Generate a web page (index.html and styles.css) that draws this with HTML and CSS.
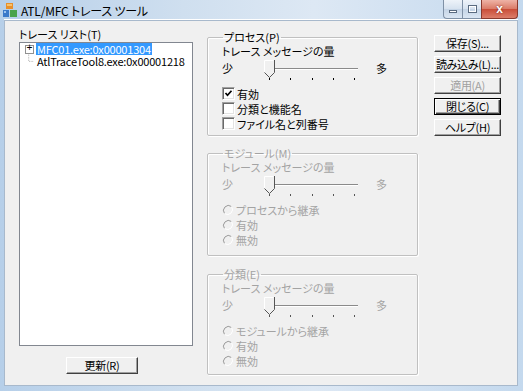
FILE: index.html
```html
<!DOCTYPE html>
<html lang="ja">
<head>
    <meta charset="UTF-8">
    <meta name="viewport" content="width=device-width, initial-scale=1.0">
    <title>ATL/MFC トレース ツール</title>
    <link rel="stylesheet" href="styles.css">
</head>
<body>
<div class="window">
    <div class="titlebar">
        <svg class="app-icon" width="14" height="15" viewBox="0 0 14 15">
            <rect x="3" y="0" width="7" height="6" fill="#e8902c"/>
            <rect x="4" y="1" width="5" height="2" fill="#f6c26c"/>
            <rect x="0" y="7" width="6" height="7" fill="#3b79c9"/>
            <rect x="7" y="7" width="7" height="7" fill="#4aa34a"/>
            <rect x="1" y="8" width="2" height="2" fill="#9cc4f0"/>
        </svg>
        <span class="title">ATL/MFC トレース ツール</span>
        <div class="controls">
            <span class="ctl ctl-min"><i></i></span>
            <span class="ctl ctl-max"><i></i></span>
            <span class="ctl ctl-close">x</span>
        </div>
    </div>

    <div class="client">
        <div class="col-list">
            <div class="caption">トレース リスト(T)</div>
            <div class="tree">
                <div class="tree-row">
                    <span class="expander">+</span>
                    <span class="item selected">MFC01.exe:0x00001304</span>
                </div>
                <div class="tree-row">
                    <svg class="twig" width="11" height="12" viewBox="0 0 11 12">
                        <path d="M4.5 -3 V6.5 H11" fill="none" stroke="#a0a0a0" stroke-dasharray="1 1"/>
                    </svg>
                    <span class="item">AtlTraceTool8.exe:0x00001218</span>
                </div>
            </div>
            <button class="btn btn-refresh">更新(R)</button>
        </div>

        <div class="col-groups">
            <fieldset class="group group-process">
                <legend>プロセス(P)</legend>
                <div class="caption">トレース メッセージの量</div>
                <div class="slider-row">
                    <span class="end">少</span>
                    <div class="slider">
                        <div class="track"></div>
                        <div class="ticks"><i></i><i></i><i></i><i></i><i></i></div>
                        <svg class="thumb" width="11" height="18" viewBox="0 0 11 18">
                            <polygon points="0,0 10,0 10,12 5,17 0,12" fill="#f0f0f0"/>
                            <polyline points="0.5,12 0.5,0.5 9.5,0.5" fill="none" stroke="#fff"/>
                            <polyline points="10.5,0 10.5,12.5 5.5,17.5 0.5,12.5" fill="none" stroke="#555"/>
                        </svg>
                    </div>
                    <span class="end end-max">多</span>
                </div>
                <div class="options">
                    <label class="opt">
                        <span class="checkbox">
                            <svg width="9" height="9" viewBox="0 0 9 9"><path d="M1.5 4 L3.5 6.2 L7.5 1.8" fill="none" stroke="#000" stroke-width="1.7"/></svg>
                        </span>
                        有効
                    </label>
                    <label class="opt"><span class="checkbox"></span>分類と機能名</label>
                    <label class="opt"><span class="checkbox"></span>ファイル名と列番号</label>
                </div>
            </fieldset>

            <fieldset class="group group-module disabled">
                <legend>モジュール(M)</legend>
                <div class="caption">トレース メッセージの量</div>
                <div class="slider-row">
                    <span class="end">少</span>
                    <div class="slider">
                        <div class="track"></div>
                        <div class="ticks"><i></i><i></i><i></i><i></i><i></i></div>
                        <svg class="thumb" width="11" height="18" viewBox="0 0 11 18">
                            <polygon points="0,0 10,0 10,12 5,17 0,12" fill="#f0f0f0"/>
                            <polyline points="0.5,12 0.5,0.5 9.5,0.5" fill="none" stroke="#fff"/>
                            <polyline points="10.5,0 10.5,12.5 5.5,17.5 0.5,12.5" fill="none" stroke="#555"/>
                        </svg>
                    </div>
                    <span class="end end-max">多</span>
                </div>
                <div class="options">
                    <label class="opt"><svg class="radio" width="12" height="12" viewBox="0 0 12 12"><circle cx="6" cy="6" r="5" fill="#f0f0f0"/><path d="M9.5 2.5A5 5 0 0 0 2.5 9.5" fill="none" stroke="#9a9a9a"/><path d="M9.5 2.5A5 5 0 0 1 2.5 9.5" fill="none" stroke="#fff"/></svg>プロセスから継承</label>
                    <label class="opt"><svg class="radio" width="12" height="12" viewBox="0 0 12 12"><circle cx="6" cy="6" r="5" fill="#f0f0f0"/><path d="M9.5 2.5A5 5 0 0 0 2.5 9.5" fill="none" stroke="#9a9a9a"/><path d="M9.5 2.5A5 5 0 0 1 2.5 9.5" fill="none" stroke="#fff"/></svg>有効</label>
                    <label class="opt"><svg class="radio" width="12" height="12" viewBox="0 0 12 12"><circle cx="6" cy="6" r="5" fill="#f0f0f0"/><path d="M9.5 2.5A5 5 0 0 0 2.5 9.5" fill="none" stroke="#9a9a9a"/><path d="M9.5 2.5A5 5 0 0 1 2.5 9.5" fill="none" stroke="#fff"/></svg>無効</label>
                </div>
            </fieldset>

            <fieldset class="group group-category disabled">
                <legend>分類(E)</legend>
                <div class="caption">トレース メッセージの量</div>
                <div class="slider-row">
                    <span class="end">少</span>
                    <div class="slider">
                        <div class="track"></div>
                        <div class="ticks"><i></i><i></i><i></i><i></i><i></i></div>
                        <svg class="thumb" width="11" height="18" viewBox="0 0 11 18">
                            <polygon points="0,0 10,0 10,12 5,17 0,12" fill="#f0f0f0"/>
                            <polyline points="0.5,12 0.5,0.5 9.5,0.5" fill="none" stroke="#fff"/>
                            <polyline points="10.5,0 10.5,12.5 5.5,17.5 0.5,12.5" fill="none" stroke="#555"/>
                        </svg>
                    </div>
                    <span class="end end-max">多</span>
                </div>
                <div class="options">
                    <label class="opt"><svg class="radio" width="12" height="12" viewBox="0 0 12 12"><circle cx="6" cy="6" r="5" fill="#f0f0f0"/><path d="M9.5 2.5A5 5 0 0 0 2.5 9.5" fill="none" stroke="#9a9a9a"/><path d="M9.5 2.5A5 5 0 0 1 2.5 9.5" fill="none" stroke="#fff"/></svg>モジュールから継承</label>
                    <label class="opt"><svg class="radio" width="12" height="12" viewBox="0 0 12 12"><circle cx="6" cy="6" r="5" fill="#f0f0f0"/><path d="M9.5 2.5A5 5 0 0 0 2.5 9.5" fill="none" stroke="#9a9a9a"/><path d="M9.5 2.5A5 5 0 0 1 2.5 9.5" fill="none" stroke="#fff"/></svg>有効</label>
                    <label class="opt"><svg class="radio" width="12" height="12" viewBox="0 0 12 12"><circle cx="6" cy="6" r="5" fill="#f0f0f0"/><path d="M9.5 2.5A5 5 0 0 0 2.5 9.5" fill="none" stroke="#9a9a9a"/><path d="M9.5 2.5A5 5 0 0 1 2.5 9.5" fill="none" stroke="#fff"/></svg>無効</label>
                </div>
            </fieldset>
        </div>

        <div class="col-buttons">
            <button class="btn">保存(S)...</button>
            <button class="btn">読み込み(L)...</button>
            <button class="btn" disabled>適用(A)</button>
            <button class="btn btn-default">閉じる(C)</button>
            <button class="btn">ヘルプ(H)</button>
        </div>
    </div>
</div>
</body>
</html>
```

FILE: styles.css
```css
* { box-sizing: border-box; }
body {
    margin: 0;
    font-family: "Noto Sans CJK JP", "Liberation Sans", sans-serif;
    font-size: 11px;
    font-feature-settings: "palt";
    color: #000;
}

.window {
    width: 523px; height: 391px;
    display: flex; flex-direction: column;
    background: linear-gradient(90deg, #b6cfe9 0%, #cfdfef 35%, #dde8f4 60%, #c4d9ee 100%);
}

/* title bar */
.titlebar { height: 20px; display: flex; align-items: center; padding-left: 3px; }
.app-icon { margin-top: 1px; }
.title { margin-left: 4px; font-size: 12px; letter-spacing: -0.2px; }
.controls { margin-left: auto; margin-right: 5px; align-self: flex-start; display: flex; height: 19px; }
.ctl {
    display: flex; align-items: center; justify-content: center;
    height: 19px; border: 1px solid #7f91a6; border-top: none;
    background: linear-gradient(#eef3f9, #d6e2ef 50%, #c4d4e6 51%, #dae6f3);
}
.ctl-min { width: 19px; border-radius: 0 0 0 4px; border-right: none; }
.ctl-max { width: 19px; border-right: none; }
.ctl-min i { width: 8px; height: 3px; margin-top: 5px; background: #fff; border: 1px solid #5a6b80; }
.ctl-max i { width: 9px; height: 8px; background: transparent; border: 1px solid #5a6b80; box-shadow: inset 0 0 0 1px #fff; }
.ctl-close {
    width: 37px; border-radius: 0 0 4px 0; border-color: #8a3a2e;
    background: linear-gradient(#eeb3a6, #da7a66 50%, #c94d38 51%, #dc7e6a);
    color: #fff; font-family: "Liberation Sans", sans-serif; font-weight: bold; font-size: 12px;
    text-shadow: 0 0 2px #6a1a10;
}

/* client area */
.client {
    margin-left: 4px;
    width: 514px; height: 366px;
    background: #f0f0f0;
    border: 1px solid #a8b9cc;
    box-shadow: 0 -1px #fff;
    display: flex;
    padding: 7px 0 0 14px;
}
.caption { line-height: 12px; height: 12px; white-space: nowrap; }

.col-list { width: 174px; display: flex; flex-direction: column; }
.tree {
    margin-top: 2px; height: 304px;
    background: #fff; border: 1px solid #828790;
}
.tree-row { height: 12px; display: flex; align-items: center; padding-left: 5px; white-space: nowrap; }
.expander {
    width: 9px; height: 9px; border: 1px solid #919191;
    font-family: "Liberation Mono", monospace; font-size: 10px; line-height: 6px;
    text-align: center; color: #000; background: #fff;
}
.twig { overflow: visible; width: 9px; height: 12px; }
.item { margin-left: 2px; padding: 0 1px; line-height: 12px; height: 12px; letter-spacing: -0.2px; }
.selected { background: #3399ff; color: #fff; }

.btn {
    font: inherit; font-size: 11px; font-feature-settings: "palt";
    height: 17px; padding: 0; line-height: 13px; white-space: nowrap; letter-spacing: -0.3px;
    background: #f0f0f0; color: #000;
    border: 1px solid; border-color: #fff #404040 #404040 #fff;
    box-shadow: inset -1px -1px #a0a0a0;
}
.btn:disabled { color: #a0a0a0; }
.btn-default {
    border-color: #000;
    box-shadow: inset 1px 1px #fff, inset -1px -1px #404040, inset -2px -2px #a0a0a0;
}
.btn-refresh { width: 72px; margin: 11px 0 0 47px; }

/* groups */
.col-groups { width: 211px; margin-left: 14px; display: flex; flex-direction: column; }
.group {
    margin: 3px 0 0 0; padding: 2px 0 0 14px; min-width: 0;
    border: 1px solid #c0c0c0; border-radius: 2px;
    box-shadow: 1px 1px #fff, inset 1px 1px #fff;
}
.group legend { padding: 0 1px; margin-left: 1px; line-height: 12px; }
.group-process { height: 105px; }
.group-module { height: 109px; margin-top: 11px; }
.group-category { height: 107px; margin-top: 12px; }
.disabled { color: #a3a3a3; }

.slider-row { display: flex; align-items: flex-start; margin-top: 3px; }
.end { line-height: 12px; margin-top: 2px; width: 11px; }
.end-max { margin-left: 16px; }
.slider { position: relative; width: 96px; height: 22px; margin-left: 31px; }
.track { margin: 8px 0 0 5px; width: 89px; height: 2px; border-top: 1px solid #8a8a8a; border-bottom: 1px solid #fff; }
.ticks { margin: 8px 0 0 5px; width: 86px; display: flex; justify-content: space-between; }
.ticks i { width: 1px; height: 2px; background: #000; }
.disabled .ticks i { background: #555; }
.thumb { position: absolute; left: 0; top: 0; }

.options { margin-top: 4px; display: flex; flex-direction: column; }
.opt { height: 15px; display: flex; align-items: center; white-space: nowrap; }
.checkbox {
    width: 13px; height: 13px; margin-right: 2px;
    display: flex; align-items: center; justify-content: center;
    background: #fff;
    border: 1px solid; border-color: #a0a0a0 #fff #fff #a0a0a0;
    box-shadow: inset 1px 1px #696969, inset -1px -1px #e3e3e3;
}
.radio { margin-right: 2px; flex-shrink: 0; }

/* buttons column */
.col-buttons { width: 67px; margin-left: 16px; padding-top: 7px; display: flex; flex-direction: column; gap: 4px; }
.col-buttons .btn { width: 67px; }
```
